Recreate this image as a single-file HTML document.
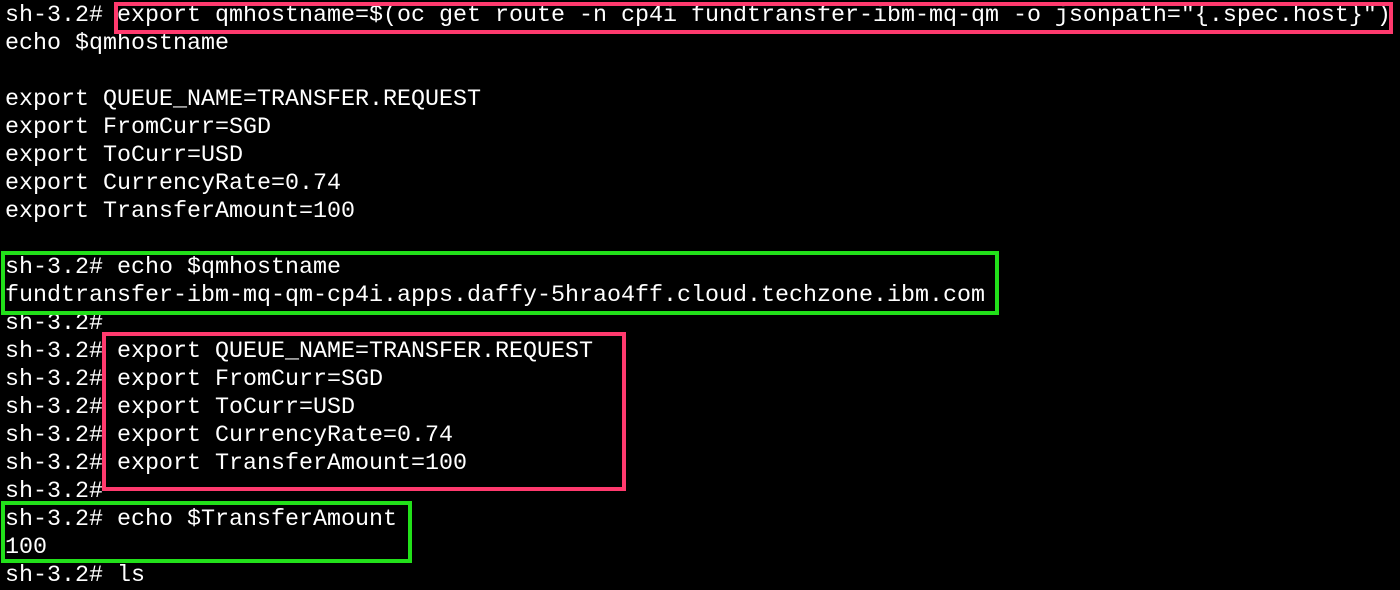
<!DOCTYPE html>
<html><head><meta charset="utf-8"><style>
html,body{margin:0;padding:0;background:#000;width:1400px;height:586px;overflow:hidden}
pre{margin:0;position:absolute;left:5px;top:2px;color:#fff;font-family:"Liberation Mono",monospace;font-size:23.33px;line-height:28px;white-space:pre}
.b{position:absolute;box-sizing:border-box;border:4px solid}
.p{border-color:#ff3a6e}
.g{border-color:#22e01a}
</style></head><body>
<pre>sh-3.2# export qmhostname=$(oc get route -n cp4i fundtransfer-ibm-mq-qm -o jsonpath="{.spec.host}")
echo $qmhostname

export QUEUE_NAME=TRANSFER.REQUEST
export FromCurr=SGD
export ToCurr=USD
export CurrencyRate=0.74
export TransferAmount=100

sh-3.2# echo $qmhostname
fundtransfer-ibm-mq-qm-cp4i.apps.daffy-5hrao4ff.cloud.techzone.ibm.com
sh-3.2#
sh-3.2# export QUEUE_NAME=TRANSFER.REQUEST
sh-3.2# export FromCurr=SGD
sh-3.2# export ToCurr=USD
sh-3.2# export CurrencyRate=0.74
sh-3.2# export TransferAmount=100
sh-3.2#
sh-3.2# echo $TransferAmount
100
sh-3.2# ls</pre>
<div class="b p" style="left:114px;top:2px;width:1279px;height:32px"></div>
<div class="b g" style="left:1px;top:251px;width:998px;height:64px"></div>
<div class="b p" style="left:102px;top:332px;width:524px;height:159px"></div>
<div class="b g" style="left:1px;top:501px;width:411px;height:62px"></div>
</body></html>
